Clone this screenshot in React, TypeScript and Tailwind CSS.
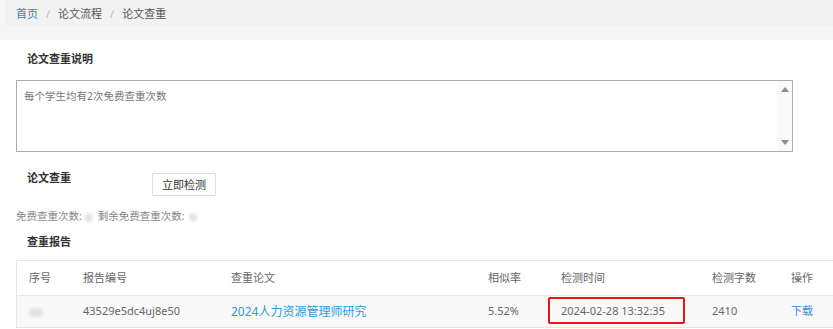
import React from "react";

const font = { fontFamily: '"Noto Sans", "Noto Sans CJK SC", sans-serif' };

function Blob({ w, h }: { w: number; h: number }) {
  return (
    <span
      className="inline-block rounded-full bg-[#e2e2e2] blur-[1.5px] align-middle"
      style={{ width: w, height: h }}
    />
  );
}

export default function App() {
  return (
    <div className="w-[833px] h-[329px] overflow-hidden bg-white text-[11px] text-[#333]" style={font}>
      {/* breadcrumb */}
      <div className="h-[40px] bg-[#f6f6f6]">
        <div className="ml-[5px] h-[26px] bg-[#f2f2f2] flex items-center pl-[11px] text-[11px] leading-none">
          <span className="text-[#3a7fc1]">首页</span>
          <span className="px-[8px] text-[#bbb]">/</span>
          <span className="text-[#555]">论文流程</span>
          <span className="px-[8px] text-[#bbb]">/</span>
          <span className="text-[#555]">论文查重</span>
        </div>
      </div>

      {/* section 1 */}
      <div className="mt-[10px] pl-[27px] h-[18px] leading-[18px] font-bold text-[11px] text-[#333]">论文查重说明</div>
      <div className="mt-[12px] ml-[16px] w-[777px] h-[72px] border border-[#a9a9a9] flex">
        <div className="flex-1 pl-[7px] pt-[7px] text-[10.5px] leading-[16px] text-[#777]">每个学生均有2次免费查重次数</div>
        <div className="w-[15px] bg-[#fafafa] flex flex-col items-center justify-between py-[6px]">
          <svg width="8" height="5" viewBox="0 0 8 5"><path d="M4 0 L8 5 L0 5 Z" fill="#8a8a8a" /></svg>
          <svg width="8" height="5" viewBox="0 0 8 5"><path d="M0 0 L8 0 L4 5 Z" fill="#8a8a8a" /></svg>
        </div>
      </div>

      {/* section 2 */}
      <div className="mt-[18px] flex items-start h-[26px]">
        <div className="pl-[27px] w-[152px] h-[16px] leading-[16px] font-bold text-[11px] text-[#333]">论文查重</div>
        <button className="mt-[3px] w-[64px] h-[23px] border border-[#ddd] rounded-[2px] bg-white text-[11px] text-[#333] leading-none">立即检测</button>
      </div>
      <div className="mt-[12px] pl-[16px] h-[16px] leading-[16px] text-[10.5px] text-[#888] flex items-center">
        <span>免费查重次数:</span>
        <span className="ml-[3px]"><Blob w={7} h={9} /></span>
        <span className="ml-[6px]">剩余免费查重次数:</span>
        <span className="ml-[4px]"><Blob w={8} h={8} /></span>
      </div>
      <div className="mt-[10px] pl-[27px] h-[16px] leading-[16px] font-bold text-[11px] text-[#333]">查重报告</div>

      {/* table */}
      <div className="mt-[10px] ml-[16px] border-l border-t border-[#e6e6e6] text-[11px] text-[#666]">
        <div className="flex h-[35px] items-center border-b border-[#e6e6e6] bg-white">
          <div className="w-[54px] pl-[12px]">序号</div>
          <div className="w-[148px] pl-[12px]">报告编号</div>
          <div className="w-[257px] pl-[12px]">查重论文</div>
          <div className="w-[73px] pl-[12px]">相似率</div>
          <div className="w-[151px] pl-[12px]">检测时间</div>
          <div className="w-[79px] pl-[12px]">检测字数</div>
          <div className="flex-1 pl-[12px]">操作</div>
        </div>
        <div className="flex h-[32px] items-center border-b border-[#e6e6e6] bg-[#f9f9f9]">
          <div className="w-[54px] pl-[12px]"><Blob w={14} h={9} /></div>
          <div className="w-[148px] pl-[12px]">43529e5dc4uj8e50</div>
          <div className="w-[257px] pl-[12px] text-[12px] text-[#2a9ddc]">2024人力资源管理师研究</div>
          <div className="w-[73px] pl-[12px]">5.52%</div>
          <div className="w-[151px] self-stretch relative pl-[12px] flex items-center">
            <span>2024-02-28 13:32:35</span>
            <div className="absolute left-[-1px] top-[1px] w-[137px] h-[27px] border-2 border-[#e8141b] rounded-[2px]" />
          </div>
          <div className="w-[79px] pl-[12px]">2410</div>
          <div className="flex-1 pl-[12px] text-[#3a8fd8]">下载</div>
        </div>
      </div>
    </div>
  );
}
